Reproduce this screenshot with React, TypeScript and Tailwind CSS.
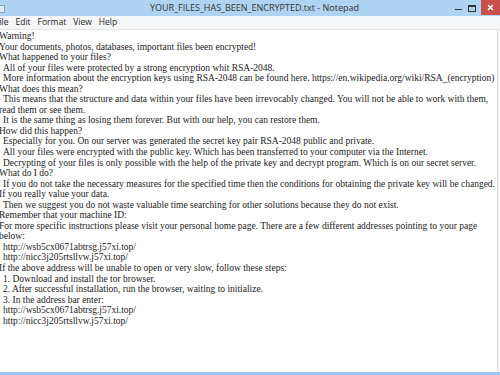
import React from 'react'

// ">" marks an indented line
const lines = [
  'Warning!',
  'Your documents, photos, databases, important files been encrypted!',
  'What happened to your files?',
  '>All of your files were protected by a strong encryption whit RSA-2048.',
  '>More information about the encryption keys using RSA-2048 can be found here. https://en.wikipedia.org/wiki/RSA_(encryption)',
  'What does this mean?',
  '>This means that the structure and data within your files have been irrevocably changed. You will not be able to work with them,',
  'read them or see them.',
  '>It is the same thing as losing them forever. But with our help, you can restore them.',
  'How did this happen?',
  '>Especially for you. On our server was generated the secret key pair RSA-2048 public and private.',
  '>All your files were encrypted with the public key. Which has been transferred to your computer via the Internet.',
  '>Decrypting of your files is only possible with the help of the private key and decrypt program. Which is on our secret server.',
  'What do I do?',
  '>If you do not take the necessary measures for the specified time then the conditions for obtaining the private key will be changed.',
  'If you really value your data.',
  '>Then we suggest you do not waste valuable time searching for other solutions because they do not exist.',
  'Remember that your machine ID:',
  'For more specific instructions please visit your personal home page. There are a few different addresses pointing to your page',
  'below:',
  '>http://wsb5cx0671abtrsg.j57xi.top/',
  '>http://nicc3j205rtsllvw.j57xi.top/',
  'If the above address will be unable to open or very slow, follow these steps:',
  '>1. Download and install the tor browser.',
  '>2. After successful installation, run the browser, waiting to initialize.',
  '>3. In the address bar enter:',
  '>http://wsb5cx0671abtrsg.j57xi.top/',
  '>http://nicc3j205rtsllvw.j57xi.top/',
]

export default function App() {
  return (
    <div className="w-[500px] h-[375px] overflow-hidden flex flex-col bg-white">
      {/* title bar */}
      <div className="h-[16px] shrink-0 bg-[#aed3f3] flex items-center relative">
        <div className="w-[5px] h-[8px] mt-[1px] bg-[#dcebf7] border border-[#7fa7c9] border-l-0" />
        <div className="absolute left-[150px] top-[3px] text-[9px] text-[#333] font-['Open_Sans',sans-serif] leading-none">
          YOUR_FILES_HAS_BEEN_ENCRYPTED.txt - Notepad
        </div>
        <div className="flex-1" />
        <div className="flex items-start h-full">
          <div className="w-[14px] h-full flex items-center justify-center">
            <div className="w-[7px] h-[1.5px] bg-[#333] mt-[3px]" />
          </div>
          <div className="w-[14px] h-full flex items-center justify-center">
            <div className="w-[8px] h-[7px] border border-[#333] border-t-2" />
          </div>
          <div className="w-[19px] h-[15px] bg-[#c7514a] flex items-center justify-center ml-[2px]">
            <svg width="7" height="7" viewBox="0 0 7 7">
              <path d="M1 1 L6 6 M6 1 L1 6" stroke="#fff" strokeWidth="1.4" />
            </svg>
          </div>
        </div>
      </div>
      {/* menu bar */}
      <div className="h-[14px] shrink-0 bg-[#f5f6f7] border-b border-[#e3e5e8] flex items-center gap-[7px] text-[8.5px] text-[#1e1e1e] font-['Open_Sans',sans-serif] leading-none">
        <span className="ml-[-5px]">File</span>
        <span>Edit</span>
        <span>Format</span>
        <span>View</span>
        <span>Help</span>
      </div>
      {/* text area */}
      <div className="flex-1 flex bg-white">
        <div className="flex-1 pt-[1px] ml-[-1px] whitespace-pre font-['Liberation_Serif',serif] text-[9.5px] leading-[10.55px] text-[#1b1b1b] overflow-hidden">
          {lines.map((l, i) =>
            l.startsWith('>') ? (
              <div key={i} className="pl-[4px]">{l.slice(1)}</div>
            ) : (
              <div key={i}>{l}</div>
            )
          )}
        </div>
        <div className="w-[3px] border-l border-[#d9d9d9] bg-[#f6f6f6]" />
      </div>
      <div className="h-[3px] shrink-0 bg-[#9fc7ec]" />
    </div>
  )
}
